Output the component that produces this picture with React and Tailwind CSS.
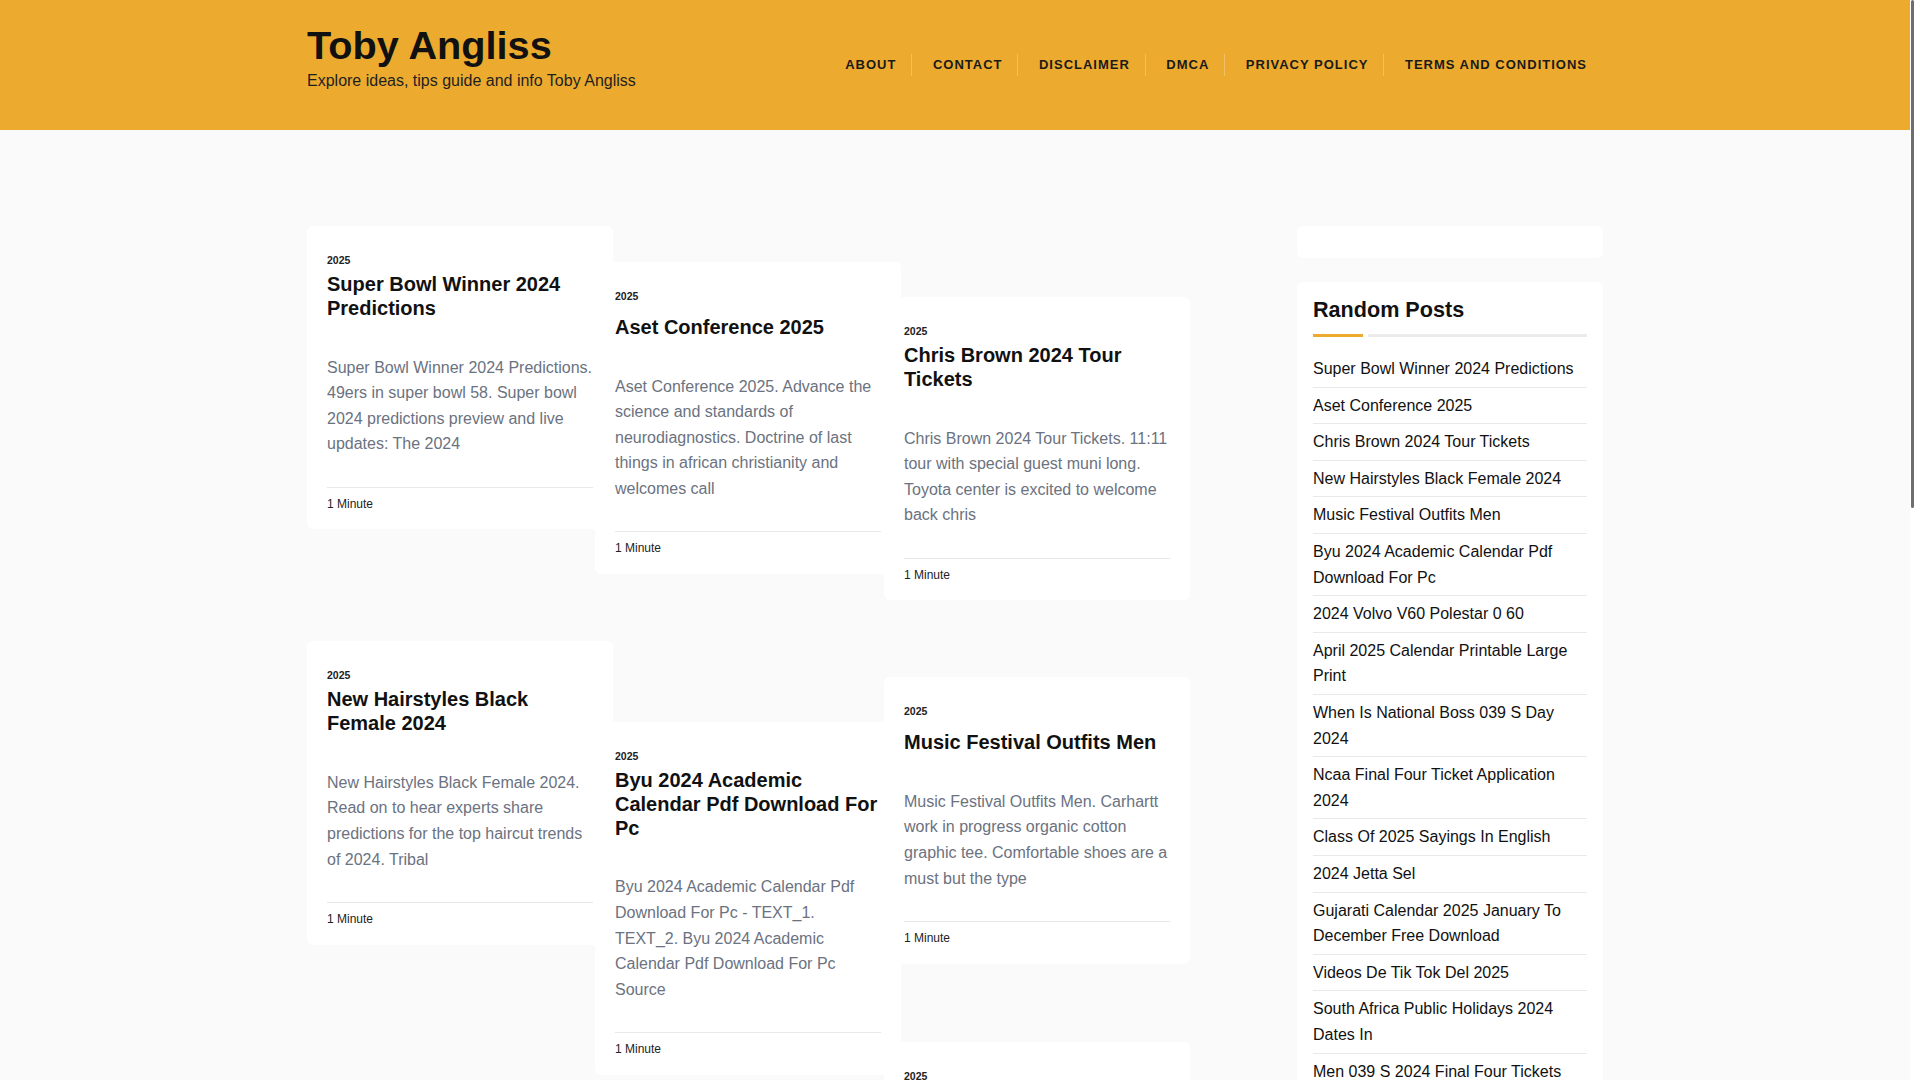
const NAV = ['About', 'Contact', 'Disclaimer', 'DMCA', 'Privacy Policy', 'Terms and Conditions'];

const COLUMNS = [
  [
    { mt: 'mt-0', title: 'Super Bowl Winner 2024 Predictions', text: 'Super Bowl Winner 2024 Predictions. 49ers in super bowl 58. Super bowl 2024 predictions preview and live updates: The 2024' },
    { mt: 'mt-[112px]', title: 'New Hairstyles Black Female 2024', text: 'New Hairstyles Black Female 2024. Read on to hear experts share predictions for the top haircut trends of 2024. Tribal' },
    { mt: 'mt-[150px]', title: 'April 2025 Calendar Printable Large Print', text: 'April 2025 Calendar Printable Large Print. Free printable calendar templates with holidays. Download and print the' },
    { mt: 'mt-[112px]', title: 'Class Of 2025 Sayings In English', text: 'Class Of 2025 Sayings In English. Senior quotes and captions for graduation. Funny and inspirational sayings for the' },
  ],
  [
    { mt: 'mt-[36px]', single: true, title: 'Aset Conference 2025', text: 'Aset Conference 2025. Advance the science and standards of neurodiagnostics. Doctrine of last things in african christianity and welcomes call' },
    { mt: 'mt-[148px]', title: 'Byu 2024 Academic Calendar Pdf Download For Pc', text: 'Byu 2024 Academic Calendar Pdf Download For Pc - TEXT_1. TEXT_2. Byu 2024 Academic Calendar Pdf Download For Pc Source' },
    { mt: 'mt-[148px]', title: 'When Is National Boss 039 S Day 2024', text: 'When Is National Boss 039 S Day 2024. National boss day is celebrated every year in october. Show your appreciation' },
  ],
  [
    { mt: 'mt-[71px]', title: 'Chris Brown 2024 Tour Tickets', text: 'Chris Brown 2024 Tour Tickets. 11:11 tour with special guest muni long. Toyota center is excited to welcome back chris' },
    { mt: 'mt-[77px]', single: true, title: 'Music Festival Outfits Men', text: 'Music Festival Outfits Men. Carhartt work in progress organic cotton graphic tee. Comfortable shoes are a must but the type' },
    { mt: 'mt-[78px]', title: '2024 Volvo V60 Polestar 0 60', text: '2024 Volvo V60 Polestar 0 60. The plug in hybrid wagon delivers strong acceleration and refined handling for the' },
    { mt: 'mt-[78px]', title: 'Ncaa Final Four Ticket Application 2024', text: 'Ncaa Final Four Ticket Application 2024. Apply for the chance to purchase tickets to the final four in phoenix' },
  ],
];

const RANDOM = [
  'Super Bowl Winner 2024 Predictions',
  'Aset Conference 2025',
  'Chris Brown 2024 Tour Tickets',
  'New Hairstyles Black Female 2024',
  'Music Festival Outfits Men',
  'Byu 2024 Academic Calendar Pdf Download For Pc',
  '2024 Volvo V60 Polestar 0 60',
  'April 2025 Calendar Printable Large Print',
  'When Is National Boss 039 S Day 2024',
  'Ncaa Final Four Ticket Application 2024',
  'Class Of 2025 Sayings In English',
  '2024 Jetta Sel',
  'Gujarati Calendar 2025 January To December Free Download',
  'Videos De Tik Tok Del 2025',
  'South Africa Public Holidays 2024 Dates In',
  'Men 039 S 2024 Final Four Tickets',
  'Tax Brackets 2024 Married Filing Jointly',
  'Easter Sunday 2025 Date Calendar',
];

function Card({ mt, single, title, text }) {
  return (
    <article className={`${mt} relative w-[306px] bg-white rounded-md px-[20px] pt-[27px] pb-[16.5px]`}>
      <div className="text-[10.5px] leading-[15px] font-bold text-[#222]">2025</div>
      <h2 className={`${single ? 'mt-[11px]' : 'mt-[4px]'} text-[20px] leading-[24px] font-bold text-[#111]`}>{title}</h2>
      <p className="mt-[34.5px] text-[16px] leading-[25.6px] text-[#6b7280]">{text}</p>
      <div className="mt-[30px] border-t border-[#e8e8e8] pt-[7px] text-[12px] leading-[18px] text-[#222]">1 Minute</div>
    </article>
  );
}

export default function App() {
  return (
    <div className="flex h-screen font-['Liberation_Sans',Arial,sans-serif]">
      <div className="flex-1 overflow-y-auto bg-[#fafafa] [scrollbar-width:none]">
        <header className="bg-[#ecab2f] h-[130px]">
          <div className="w-[1296px] mx-auto flex justify-between items-start">
            <div className="pt-[22px]">
              <h1 className="text-[39.7px] leading-[46.5px] font-bold text-[#111]">Toby Angliss</h1>
              <p className="text-[16px] leading-[24px] text-[#1f1f1f]">Explore ideas, tips guide and info Toby Angliss</p>
            </div>
            <nav className="pt-[54px] pr-[1px]">
              <ul className="flex">
                {NAV.map((n, i) => (
                  <li key={n} className={`h-[22px] flex items-center pl-[20.5px] pr-[15px] ${i ? 'border-l border-white/25' : ''}`}>
                    <a className="block text-[13px] leading-[20px] font-bold uppercase tracking-[1px] text-[#1a1a1a]">{n}</a>
                  </li>
                ))}
              </ul>
            </nav>
          </div>
        </header>

        <main className="w-[1296px] mx-auto flex justify-between pt-[96px] pb-[110px]">
          <div className="flex w-[883px]">
            {COLUMNS.map((col, ci) => (
              <div key={ci} className={`${ci === 2 ? 'w-[306px]' : ci === 1 ? 'w-[289px]' : 'w-[288px]'} shrink-0 flex flex-col`}>
                {col.map((c) => <Card key={c.title} {...c} />)}
              </div>
            ))}
          </div>

          <aside className="w-[306px] shrink-0">
            <div className="h-[32px] bg-white rounded-md" />
            <div className="mt-[24px] bg-white rounded-md px-[16px] pt-[15.3px] pb-[16px]">
              <h3 className="text-[21.6px] leading-[26px] font-bold text-[#111]">Random Posts</h3>
              <div className="mt-[10.8px] flex gap-[5px]">
                <span className="w-[50px] h-[3px] bg-[#ecab2f]" />
                <span className="flex-1 h-[3px] bg-[#ebebeb]" />
              </div>
              <ul className="mt-[14px]">
                {RANDOM.map((r) => (
                  <li key={r} className="border-b border-[#e9e9e9] py-[5px] text-[16px] leading-[25.6px] text-[#111]">
                    <a>{r}</a>
                  </li>
                ))}
              </ul>
            </div>
          </aside>
        </main>
      </div>
      {/* scrollbar strip */}
      <div className="w-[10px] shrink-0 bg-white">
        <div className="ml-[1px] w-[3px] h-[508px] rounded-full bg-[#6e6e6e]" />
      </div>
    </div>
  );
}
